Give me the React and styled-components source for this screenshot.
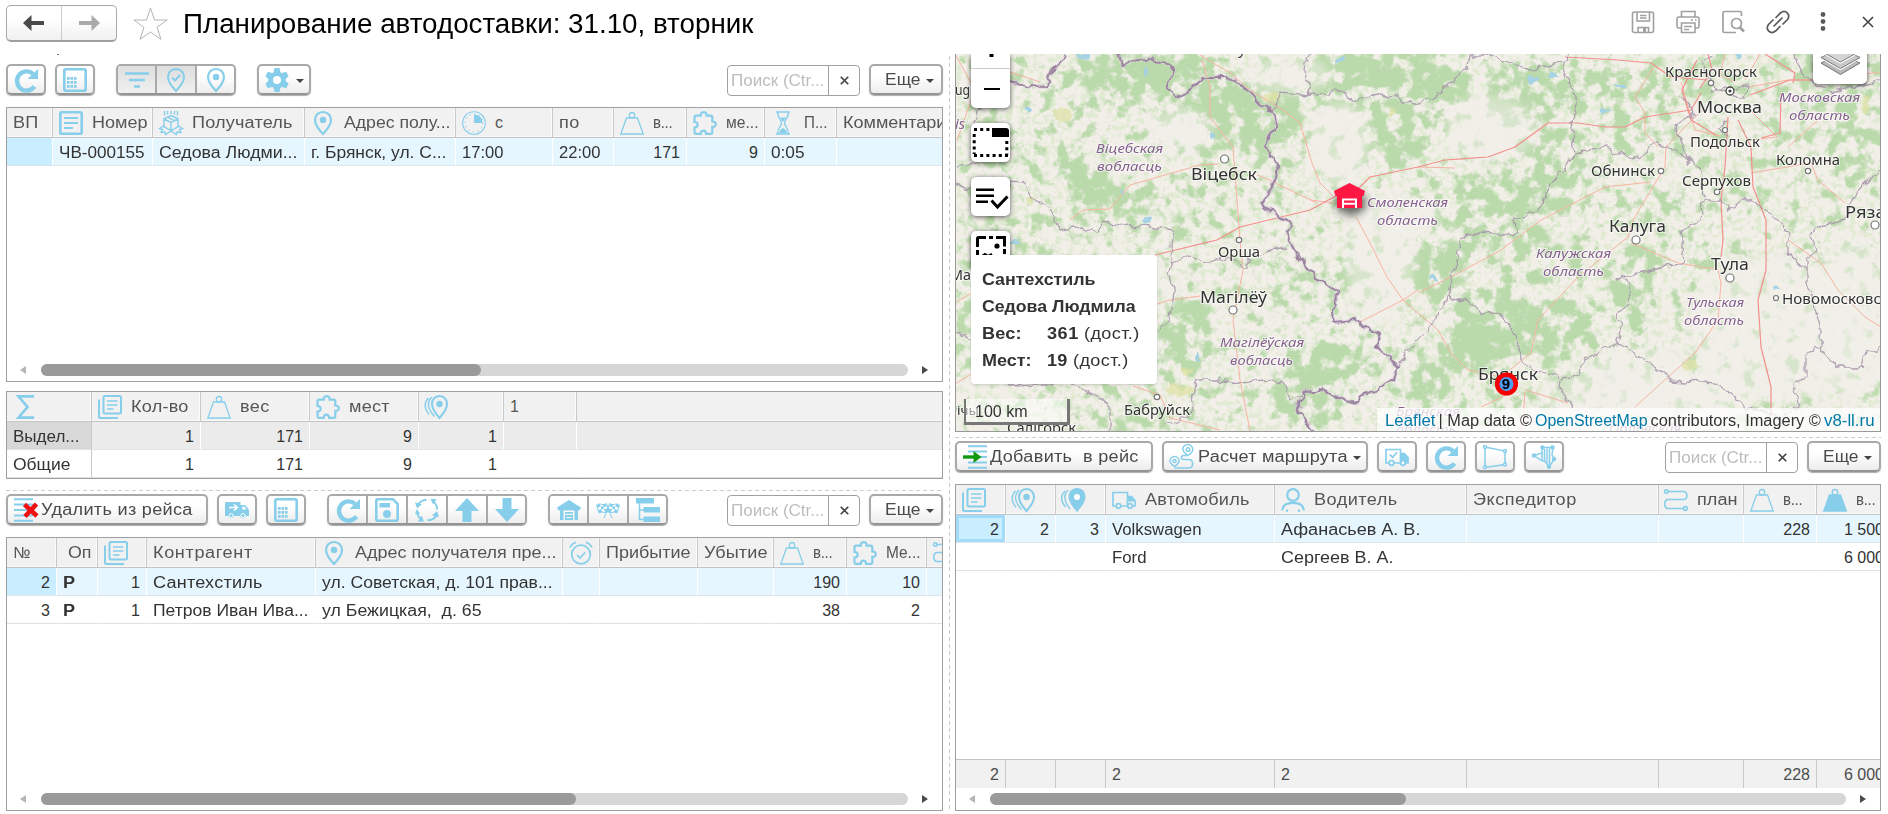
import React from "react";
import styled, { createGlobalStyle, css } from "styled-components";

const SKY = "#87ceeb";
const SANS = '"Liberation Sans", Arial, sans-serif';

const Global = createGlobalStyle`
  * { box-sizing: border-box; }
  body { margin: 0; background: #fff; font-family: ${SANS}; font-size: 16px; color: #333; overflow: hidden; }
`;

/* ---------- text widened to a given width ---------- */
const ruler = document.createElement("canvas").getContext("2d");
const widen = (text, width, size, weight) => {
  ruler.font = `${weight} ${size}px "Liberation Sans"`;
  const natural = ruler.measureText(text).width;
  const scale = Math.min(1.13, Math.max(0.94, (width + 1.5) / natural));
  const spacing = ((width + 1.5) / scale - natural) / Math.max(1, text.length - 0.5);
  return { width, letterSpacing: `${spacing.toFixed(2)}px`, transform: `scaleX(${scale.toFixed(3)})` };
};
const Tracked = styled.span`
  display: inline-block;
  white-space: pre;
  text-align: left;
  flex: none;
  transform-origin: 0 50%;
  font-size: ${(p) => p.$size}px;
  font-weight: ${(p) => p.$weight};
`;
function Txt({ w, size = 16, weight = 400, children }) {
  return <Tracked $size={size} $weight={weight} style={w ? widen(children, w, size, weight) : undefined}>{children}</Tracked>;
}

/* ---------- icons ---------- */
const IconSvg = styled.svg`
  display: block;
  flex: none;
  overflow: visible;
`;
const Svg = ({ size = 24, color = SKY, sw = 2, children }) => (
  <IconSvg width={size} height={size} viewBox="0 0 24 24" fill="none" stroke={color} strokeWidth={sw} color={color}>
    {children}
  </IconSvg>
);
const solid = { fill: "currentColor", stroke: "none" };
const PIN = "M12 1C7.3 1 4 4.600 4 9c0 5.500 8 14 8 14s8-8.500 8-14c0-4.400-3.300-8-8-8z";

const Icon = {
  refresh: () => <Svg sw={4.4}><path d="M20.500 18.500A9.600 9.600 0 1 1 19 5.800" /><path {...solid} d="M24 1v10H13.500z" /></Svg>,
  sheet: () => (
    <Svg sw={2.6}><rect x="1.300" y="1.300" width="21.400" height="21.400" rx="1.500" />
      <g {...solid}>{[9, 13, 17].map((y) => [4, 7.5, 11].map((x) => <rect key={`${x}-${y}`} x={x} y={y} width="2.600" height="2.800" />))}</g>
    </Svg>
  ),
  filter: () => <Svg sw={2.4}><path d="M0 5.500h24M4 12h16M9 18.500h6" /></Svg>,
  pinCheck: () => <Svg sw={2.1}><path d={PIN} /><path d="M8 9.500l3 3 5.200-5.500" /></Svg>,
  pin: () => <Svg sw={2.2}><path d={PIN} /><circle {...solid} cx="12" cy="9" r="3.200" /></Svg>,
  pins: () => <Svg sw={2.1}><path d="M14.500 1C9.900 1 7 4.600 7 9c0 5.500 7.500 14 7.500 14S22 14.500 22 9c0-4.400-2.900-8-7.500-8z" /><circle {...solid} cx="14.500" cy="9" r="3.200" /><path d="M7 2C2 6.500 2 13 9.500 21.500M3.500 3C-1 7.500-1 13 4 19.500" strokeWidth="1.400" /></Svg>,
  pinsFull: () => <Svg sw={1.500}><path {...solid} d="M15 0C10 0 6.500 3.800 6.500 9c0 6 8.500 15 8.500 15s8.500-9 8.500-15c0-5.200-3.500-9-8.500-9z" /><circle cx="15" cy="9" r="3" fill="#fff" stroke="none" /><path d="M6 2C1.500 6.500 1 12 8 21M3 3C-1.500 7.500-1.500 13 3.500 19" strokeWidth="1.400" /></Svg>,
  gear: () => (
    <Svg><g {...solid}>{[0, 60, 120].map((a) => <path key={a} transform={`rotate(${a} 12 12)`} d="M9.500 0h5l1.200 5v14l-1.200 5h-5l-1.200-5V5z" />)}<circle cx="12" cy="12" r="8.600" /></g>
      <circle cx="12" cy="12" r="4" fill="#fff" stroke="none" /></Svg>
  ),
  article: () => <Svg sw={2.6}><rect x="1.300" y="1.300" width="21.400" height="21.400" rx="1.500" /><path d="M5 7h14M5 12h14M5 17h9" strokeWidth="2.200" /></Svg>,
  articles: () => <Svg sw={2}><rect x="5.500" y="1" width="17.500" height="17.500" rx="1.500" /><path d="M9 6h10.500M9 10h10.500M9 14h6.500" strokeWidth="1.700" /><path d="M1 4.500V21.500a1.500 1.500 0 0 0 1.500 1.500H20" /></Svg>,
  parcel: () => <Svg sw={1.400}><path d="M12 4.500l7 3.300v8L12 19.500 5 15.800v-8zM5 8l7 3.500L19 8M12 11.500v8M8.500 6.200l7 3.400M5.500 0v4.500M8.500 0v3.500M12 0v3M15.500 0v3.500M18.500 0v4.500" /><path d="M5 14.500l-4.500 3 3 1-1.500 3 4-.5.500 2.500 5.500-3.500 5.500 3.500.500-2.500 4 .5-1.500-3 3-1-4.500-3" /></Svg>,
  clock: () => <Svg sw={1.100}><circle cx="12" cy="12" r="11.300" /><circle cx="12" cy="12" r="8.800" strokeDasharray="1.200 3.400" /><path {...solid} d="M12 3.500V12h8.500C20.500 7 17 3.500 12 3.500z" /></Svg>,
  weight: () => <Svg sw={1.300}><path d="M6.500 7h11l5.700 16H.8z" /><circle cx="12" cy="4.200" r="2.700" /></Svg>,
  weightFull: () => <Svg sw={1.500}><path d="M6.500 7h11l5.700 16H.8z" fill="currentColor" /><circle cx="12" cy="4.200" r="2.700" /></Svg>,
  puzzle: () => <Svg sw={2.2}><path d="M1.500 6.500c0-1 .6-1.800 1.600-1.800h4.700c-.2-2 .6-3.600 2.900-3.600s3.100 1.600 2.900 3.600h4c1 0 1.700.8 1.700 1.800v4c2 0 3.500.8 3.500 2.700s-1.500 2.800-3.500 2.700v5.300c0 1-.7 1.600-1.700 1.600h-4.500c-.2-2-1-3.200-2.700-3.200s-2.500 1.200-2.700 3.200H3.100c-1 0-1.600-.6-1.600-1.600v-4.500c2-.2 3.200-1 3.200-2.900s-1.200-2.800-3.200-2.800z" /></Svg>,
  hourglass: () => <Svg sw={1.400}><path d="M5 1h14M5 23h14M6.500 1c0 6 4 7.500 4 11s-4 5-4 11M17.500 1c0 6-4 7.500-4 11s4 5 4 11" /><path {...solid} d="M9 6.500h6L12 11zM8 22c.5-3 2.500-4 4-5 1.500 1 3.500 2 4 5z" /></Svg>,
  sigma: () => <Svg sw={2.7}><path d="M21 1.400H5.500L14.500 12l-9 10.600H21" /></Svg>,
  truckFull: () => (
    <Svg><path {...solid} d="M1 4h14.500v3H20l4 5v6h-3.200a3 3 0 0 1-5.800 0H9a3 3 0 0 1-5.800 0H0V5a1 1 0 0 1 1-1z" /><path d="M4 9.500h8M9 6.500l3.500 3L9 12.500" stroke="#fff" strokeWidth="1.600" /><path d="M17.300 8.800h2.200l1.800 2.700h-4z" fill="#fff" stroke="none" /><circle cx="6.100" cy="17.500" r="2" fill={SKY} stroke="#fff" strokeWidth="1" /><circle cx="17.900" cy="17.500" r="2" fill={SKY} stroke="#fff" strokeWidth="1" /></Svg>
  ),
  truck: () => <Svg sw={1.700}><path d="M4 18H1V4.500h14.500V18H9M15.500 18v-9.500h4l3.500 4V18h-2.500" /><path {...solid} d="M16 9h3.500l3.500 4.500h-7z" /><circle cx="6.500" cy="18" r="2.300" /><circle cx="18" cy="18" r="2.300" /></Svg>,
  truckCheck: () => <Svg sw={1.700}><path d="M4 18H1V4.500h14.500V18H9M15.500 18v-9.500h4l3.500 4V18h-2.500M4.800 9.500l2.800 2.700 4.500-5" /><path {...solid} d="M16 9h3.500l3.500 4.500V17h-7z" /><circle cx="6.500" cy="18" r="2.300" fill="#fff" /><circle cx="18" cy="18" r="2.300" fill="#fff" /></Svg>,
  disk: () => <Svg sw={2.600}><path d="M2.500 1.300H18l4.700 4.700v15.200a1.500 1.500 0 0 1-1.500 1.500H2.800a1.500 1.500 0 0 1-1.500-1.500V2.500a1.200 1.200 0 0 1 1.200-1.200z" /><path {...solid} d="M4.500 5H15v4.500H4.500z" /><circle {...solid} cx="12" cy="16" r="4" /></Svg>,
  cycle: () => <Svg sw={2}><path d="M11.500 2C7.500 1.500 3.500 4.500 2.500 8M22 11.500c0-4-2-7-4.500-8.500M12.500 22c4 .5 7.500-1.500 9.500-5.500M2 12.500c0 4 2 7.500 5.500 9" /><path {...solid} d="M0 4.500l7 1.800-5 4.200zM15.500 1h6l-3.500 5.500zM24 19l-7-1.500 5-4.500zM9 23.500H3l3.500-6zM2 11l3 5H0z" /></Svg>,
  up: () => <Svg><path {...solid} d="M12 0l12 13h-7.500v11h-9V13H0z" /></Svg>,
  down: () => <Svg><path {...solid} d="M7.500 0h9v11H24L12 24 0 11h7.500z" /></Svg>,
  garage: () => <Svg><path {...solid} d="M12 2l12 7.500-1.500 3H21V22h-3.500v-9.500h-11V22H3v-9.500H1.500L0 9.500zM8 14h8v1.800H8zM8 17h8v5H8z" /><path d="M9.500 19.500h5" stroke="#fff" strokeWidth="1" /></Svg>,
  flags: () => (
    <Svg sw={1}><path d="M.5 7c3.500-2.500 6 1 10-1l2 7.500c-3.500 2.500-6-.5-9.500 1.500zM23.500 7c-3.500-2.500-6 1-10-1l-2 7.500c3.500 2.500 6-.5 9.500 1.500zM10 5l6 15M14 5L8 20" />
      <path {...solid} d="M1 7l2.800-1 .8 2.600-2.800 1zM6.500 6l3 .5.600 2.600-3-.5zM4.600 8.600l2.600-.2.800 2.700-2.700.2zM2.500 12l2.800-.7.800 2.600-2.800 1zM8 11l3-.2.800 2.900-2.800.3zM23 7l-2.800-1-.8 2.600 2.800 1zM17.500 6l-3 .5-.6 2.600 3-.5zM19.400 8.600l-2.600-.2-.8 2.700 2.700.2zM21.500 12l-2.800-.7-.8 2.600 2.800 1zM16 11l-3-.2-.8 2.900 2.800.3z" /></Svg>
  ),
  tree: () => <Svg sw={1.500}><path {...solid} d="M0 0h18v5.500H0zM7.500 9H24v5.500H7.500zM7.500 18.500H24V24H7.500z" /><path d="M3.500 5v16.500H8M3.500 12H8" /></Svg>,
  alarm: () => <Svg sw={1.700}><circle cx="12" cy="13.500" r="9.300" /><path d="M8 14l3 3 5.200-5.500M1 6.500C2.200 4 4 2.200 7 1.200M23 6.500C21.800 4 20 2.200 17 1.200" /></Svg>,
  route: () => <Svg sw={1.600}><path d="M4 3.500h15.500c4.500 0 4.500 8 0 8h-15c-5 0-5 9 0 9H19" /><circle cx="2.300" cy="3.500" r="1.700" /><circle cx="21.300" cy="20.500" r="1.900" /></Svg>,
  person: () => <Svg sw={2.200}><circle cx="12" cy="7" r="5.800" /><path d="M1.300 22.500C1.300 17 6 14.800 12 14.800S22.700 17 22.700 22.500M6 23.800v-2.300M18 23.800v-2.300" /></Svg>,
  journey: () => <Svg sw={1.500}><path d="M18 10.500c-3.500-2.500-5.200-4.200-5.200-6.200A5 5 0 0 1 22.800 4.500c0 2-1.700 3.800-4.800 6zM4.500 21.500C1.700 19.500 0 18 0 16a4.500 4.500 0 0 1 9 0c0 2-1.500 3.500-4.500 5.500zM18 10.500h-4c-3.500 0-3.500 4 0 4h4.500c5.500 0 5.500 8.500 0 8.500H4.500" /><circle cx="18" cy="4.500" r="1.800" /><circle cx="4.500" cy="16" r="1.600" /></Svg>,
  polygon: () => <Svg sw={1.500}><path d="M2 2l20 4v13.500L2 22.500z" /><g fill="#fff"><circle cx="2" cy="2" r="1.500" /><circle cx="22" cy="6" r="1.500" /><circle cx="22" cy="19.500" r="1.500" /><circle cx="2" cy="22" r="1.500" /></g></Svg>,
  area: () => <Svg sw={1.400}><path d="M2 10.500L10 8V2.500h11l-1 7.500 2.500 4-5.500 8-4-5.500-3.500-1z" /><path d="M10 7v8M12.500 4v12M15 3.500v15M17.500 3.500V20" strokeWidth="1.500" /><g {...solid}><circle cx="2" cy="10.500" r="2.200" /><circle cx="10.500" cy="2.500" r="2.200" /><circle cx="20.500" cy="2.500" r="2.200" /><circle cx="22" cy="14" r="2.200" /><circle cx="17" cy="21.800" r="2.200" /></g></Svg>,
  removeRow: () => <Svg><path d="M0 1.200h19M0 6.500h19M0 12h19M0 17.500h19M0 22.800h19" strokeWidth="2.100" /><path d="M10.500 6.500l12.500 11.500M22.500 6L11 18.500" stroke="#ee1111" strokeWidth="4.600" /></Svg>,
  addRow: () => <Svg><path d="M5 1.200h19M5 6.500h19M5 12h19M5 17.500h19M5 22.800h19" strokeWidth="2.100" /><path d="M0 12h12" stroke="#119911" strokeWidth="3.400" /><path d="M10.500 6l8 6-8 6z" fill="#119911" stroke="none" /></Svg>,
};

/* ---------- buttons ---------- */
const face = css`
  background: ${(p) => (p.$on ? "linear-gradient(#dedede, #f0f0f0)" : "linear-gradient(#fff 35%, #ededed)")};
`;
const Button = styled.button`
  display: flex;
  align-items: center;
  justify-content: ${(p) => (p.$start ? "flex-start" : "center")};
  width: ${(p) => p.$w || 40}px;
  height: 31px;
  padding: ${(p) => (p.$start ? "0 0 0 6px" : "0")};
  border: 2px solid #a9a9a9;
  border-bottom-color: #949494;
  border-radius: 5px;
  box-shadow: 0 1px 1px #aaa;
  font-family: inherit;
  color: #4a4a4a;
  ${face}
`;
const Group = styled.div`
  display: flex;
  height: 31px;
  border: 2px solid #a9a9a9;
  border-bottom-color: #949494;
  border-radius: 5px;
  box-shadow: 0 1px 1px #aaa;
  overflow: hidden;
`;
const Segment = styled.button`
  display: flex;
  align-items: center;
  justify-content: center;
  width: 40px;
  padding: 0;
  border: 0;
  border-right: 2px solid #a9a9a9;
  ${face}
  &:first-child { width: 39px; }
  &:last-child { width: 37px; border-right: 0; }
`;
const Caret = styled.i`
  width: 0;
  height: 0;
  margin: ${(p) => p.$m || "2px 0 0 7px"};
  border: 4px solid transparent;
  border-top-color: #444;
  border-bottom: 0;
`;
const Toolbar = styled.div`
  display: flex;
  align-items: flex-start;
  gap: 9px;
  height: 32px;
`;
const Gap = styled.span`
  flex: ${(p) => (p.$w ? `0 0 ${p.$w - 9}px` : "1")};
  margin-left: ${(p) => (p.$w ? "0" : "-9px")};
`;
const SearchBox = styled.div`
  display: flex;
  width: 133px;
  height: 31px;
  margin-top: 1px;
  border: 1px solid #a0a0a0;
  border-radius: 4px;
  line-height: 29px;
`;
const Hint = styled.span`
  width: 101px;
  padding-left: 3px;
  color: #bdbdbd;
  border-right: 1px solid #a0a0a0;
`;
const Clear = styled.span`
  flex: 1;
  display: flex;
  align-items: center;
  justify-content: center;
`;
const Cross = ({ size, sw }) => <Svg size={size} color="#444" sw={sw}><path d="M2 2l20 20M22 2L2 22" /></Svg>;

const SearchTools = () => (
  <>
    <SearchBox><Hint><Txt w={92}>Поиск (Ctr...</Txt></Hint><Clear><Cross size={9} sw={4.5} /></Clear></SearchBox>
    <Button $w={74}><Gap $w={15} /><Txt w={34}>Еще</Txt><Caret /></Button>
  </>
);

/* ---------- tables ---------- */
const TableBox = styled.div`
  display: flex;
  flex-direction: column;
  height: ${(p) => p.$h}px;
  border: 1px solid #9f9f9f;
  overflow: hidden;
`;
const Line = styled.div`
  display: grid;
  flex: none;
  grid-template-columns: ${(p) => p.$cols.map((c) => `${c}px`).join(" ")};
`;
const HeadCell = styled.div`
  display: flex;
  align-items: center;
  gap: 9px;
  height: 30px;
  padding: 1px 0 0 ${(p) => p.$pad ?? 6}px;
  overflow: hidden;
  background: #f1f1f1;
  color: #555;
  border-right: 1px solid #c9c9c9;
  border-bottom: 1px solid #c3c3c3;
  box-shadow: inset -1px -1px #fafafa;
`;
const tones = {
  blue: ["#e5f6ff", "#c9eeff", "#fff", "#dde5ea"],
  grey: ["#ebebeb", "#d8d8d8", "#fff", "#e4e4e4"],
  plain: ["#fff", "#fff", "transparent", "#e1e1e1"],
};
const Cell = styled.div`
  display: flex;
  align-items: center;
  justify-content: ${(p) => (p.$right ? "flex-end" : "flex-start")};
  height: 28px;
  padding: 2px 6px 0 6px;
  overflow: hidden;
  color: #333;
  background: ${(p) => tones[p.$tone][p.$first ? 1 : 0]};
  border-right: 1px solid ${(p) => (p.$first && p.$fixed ? "#c9c9c9" : tones[p.$tone][2])};
  border-bottom: 1px solid ${(p) => tones[p.$tone][3]};
  ${(p) => p.$focus && "box-shadow: inset 0 0 0 3px #a3dcf8;"}
`;
const FootCell = styled.div`
  display: flex;
  align-items: center;
  justify-content: ${(p) => (p.$right ? "flex-end" : "flex-start")};
  height: 29px;
  padding: 2px 6px 0 6px;
  background: #f1f1f1;
  color: #4c4c4c;
  border-top: 1px solid #c3c3c3;
  border-right: 1px solid #c9c9c9;
`;
const Blank = styled.div`
  flex: 1;
`;
const ScrollRow = styled.div`
  display: flex;
  align-items: center;
  flex: none;
  height: 22px;
  padding: 0 14px 0 13px;
`;
const Arrow = styled.i`
  width: 0;
  height: 0;
  border: 4px solid transparent;
  ${(p) => (p.$left ? "border-right: 6px solid #b5b5b5; border-left: 0; margin-right: 15px;" : "border-left: 6px solid #4a4a4a; border-right: 0; margin-left: 14px;")}
`;
const Track = styled.div`
  flex: 1;
  height: 12px;
  border-radius: 6px;
  background: #d6d6d6;
`;
const Thumb = styled.div`
  width: ${(p) => p.$w}px;
  height: 12px;
  border-radius: 6px;
  background: #9a9a9a;
`;
const Scroll = ({ w }) => <ScrollRow><Arrow $left /><Track><Thumb $w={w} /></Track><Arrow /></ScrollRow>;

function Table({ height, cols, head, rows, foot, scroll, fixed }) {
  return (
    <TableBox $h={height}>
      <Line $cols={cols}>
        {head.map(([icon, text, w, pad], i) => {
          const Glyph = icon && Icon[icon];
          return <HeadCell key={i} $pad={pad}>{Glyph && <Glyph />}{text && <Txt w={w}>{text}</Txt>}</HeadCell>;
        })}
      </Line>
      {rows.map((row, r) => (
        <Line key={r} $cols={cols}>
          {cols.map((_, i) => {
            const [text, w, right, weight] = row.cells[i] || [];
            return (
              <Cell key={i} $first={i === 0} $fixed={fixed} $tone={row.tone} $right={right} $focus={row.focus && i === 0}>
                {text && <Txt w={w} weight={weight}>{text}</Txt>}
              </Cell>
            );
          })}
        </Line>
      ))}
      {scroll && <Blank />}
      {foot && <Line $cols={cols}>{foot.map(([text, right], i) => <FootCell key={i} $right={right}>{text}</FootCell>)}</Line>}
      {scroll && <Scroll w={scroll} />}
    </TableBox>
  );
}

const num = (t) => [t, undefined, true];

const orders = {
  cols: [46, 100, 152, 151, 97, 61, 73, 78, 72, 200],
  head: [[null, "ВП", 24], ["article", "Номер", 54], ["parcel", "Получатель", 99], ["pin", "Адрес полу...", 105, 6], ["clock", "с"], [null, "по", 19], ["weight", "в...", 18], ["puzzle", "ме...", 31], ["hourglass", "П...", 22], [null, "Комментарий", 112]],
  rows: [{ tone: "blue", cells: [[], ["ЧВ-000155", 84], ["Седова Людми...", 137], ["г. Брянск, ул. С...", 134], ["17:00", 40], ["22:00", 40], num("171"), num("9"), ["0:05", 32], []] }],
};
const totals = {
  cols: [85, 109, 109, 109, 85, 73, 400],
  head: [["sigma"], ["articles", "Кол-во", 56], ["weight", "вес", 28], ["puzzle", "мест", 39], ["pins"], [null, "1"], []],
  rows: [
    { tone: "grey", cells: [["Выдел...", 65], num("1"), num("171"), num("9"), num("1")] },
    { tone: "plain", cells: [["Общие", 56], num("1"), num("171"), num("9"), num("1")] },
  ],
};
const stops = {
  cols: [50, 41, 49, 169, 247, 37, 98, 76, 73, 80, 80],
  head: [[null, "№", 16], [null, "Оп", 22, 11], ["articles"], [null, "Контрагент", 98], ["pin", "Адрес получателя пре...", 200], ["alarm"], [null, "Прибытие", 83], [null, "Убытие", 62], ["weight", "в...", 18], ["puzzle", "Ме...", 33], ["route"]],
  rows: [
    { tone: "blue", cells: [num("2"), ["Р", 11, false, 700], num("1"), ["Сантехстиль", 108], ["ул. Советская, д. 101 прав...", 229], [], [], [], num("190"), num("10")] },
    { tone: "plain", cells: [num("3"), ["Р", 11, false, 700], num("1"), ["Петров Иван Ива...", 154], ["ул Бежицкая,  д. 65", 158], [], [], [], num("38"), num("2")] },
  ],
};
const trips = {
  cols: [50, 50, 50, 169, 192, 192, 85, 73, 74],
  head: [["articles"], ["pins"], ["pinsFull"], ["truck", "Автомобиль", 103], ["person", "Водитель", 82], [null, "Экспедитор", 102], ["route", "план", 39, 5], ["weight", "в...", 18], ["weightFull", "в...", 18]],
  rows: [
    { tone: "blue", focus: true, cells: [num("2"), num("2"), num("3"), ["Volkswagen", 88], ["Афанасьев А. В.", 138], [], [], num("228"), num("1 500")] },
    { tone: "plain", cells: [[], [], [], ["Ford", 33], ["Сергеев В. А.", 111], [], [], [], num("6 000")] },
  ],
  foot: [["2", true], [""], [""], ["2"], ["2"], [""], [""], ["228", true], ["6 000", true]],
};

/* ---------- map ---------- */
const MapFrame = styled.div`
  position: relative;
  height: 378px;
  border: 1px solid #9a9a9a;
  border-top: 0;
  overflow: hidden;
`;
const MapSvg = styled.svg`
  display: block;
`;
/* density of the woods: x, y, rx, ry, strength */
const woods = [
  [1115, 75, 55, 24, 0.9], [1190, 85, 55, 35, 0.65], [1255, 115, 50, 34, 0.95], [1165, 68, 30, 18, 0.6], [1350, 75, 50, 25, 1], [1410, 72, 45, 28, 0.9], [1400, 135, 34, 34, 0.8], [1445, 92, 22, 32, 0.7],
  [1090, 183, 26, 24, 1], [1115, 205, 35, 20, 0.7], [1250, 160, 60, 30, 0.3], [1030, 130, 60, 60, 0.2], [1180, 210, 50, 30, 0.3],
  [1540, 80, 50, 20, 0.7], [1525, 105, 40, 16, 0.7], [1555, 190, 38, 24, 0.8], [1620, 110, 55, 50, 0.45], [1480, 195, 50, 22, 0.6], [1540, 150, 24, 30, 0.7], [1500, 228, 55, 22, 0.7], [1440, 265, 32, 26, 0.9], [1435, 290, 18, 14, 0.7],
  [1490, 325, 42, 32, 1], [1470, 355, 36, 24, 0.9], [1560, 330, 38, 32, 0.8], [1620, 292, 14, 18, 1], [1540, 262, 60, 28, 0.35], [1640, 260, 28, 14, 0.7], [1640, 312, 12, 26, 0.7], [1570, 390, 26, 18, 0.7], [1430, 385, 24, 22, 0.9], [1505, 400, 20, 12, 0.8],
  [1185, 322, 30, 24, 0.9], [1180, 362, 24, 22, 0.7], [1330, 362, 46, 18, 1], [1300, 388, 24, 16, 0.8], [1310, 405, 44, 14, 0.7], [1300, 285, 50, 24, 0.3], [1350, 270, 20, 12, 0.7], [1100, 400, 60, 30, 0.3], [1150, 430, 60, 18, 0.4], [965, 320, 16, 60, 0.6],
  [1700, 75, 60, 30, 0.35], [1820, 70, 60, 30, 0.5], [1860, 140, 30, 50, 0.55], [1790, 130, 40, 24, 0.3], [1660, 215, 40, 24, 0.35], [1730, 175, 40, 30, 0.25], [1820, 210, 40, 20, 0.2], [1030, 230, 70, 40, 0.25],
];
const bare = [
  [1490, 130, 45, 34], [1340, 145, 30, 44], [1290, 75, 40, 20], [1380, 260, 34, 60], [1780, 330, 90, 70], [1850, 320, 40, 80], [1600, 400, 60, 30], [1180, 130, 30, 20], [1120, 290, 60, 30], [1640, 370, 50, 24], [1400, 215, 40, 18], [1690, 400, 60, 30],
];
const country = [
  "1010,82 1027,86 1047,87 1050,72 1063,60 1067,54",
  "1118,54 1123,65 1147,58 1173,68 1167,88 1177,97 1198,85 1203,78 1227,78 1245,88 1253,97 1263,108 1273,110 1275,125 1265,147 1278,167 1275,182 1262,203 1278,218 1292,222 1287,237 1300,260 1317,280 1338,290 1332,322 1355,320 1380,335 1377,347 1398,365 1393,380 1353,403 1320,390 1303,392 1297,410 1313,432",
];
const regions = [
  "1273,110 1280,92 1310,95 1330,97 1335,90 1347,92 1350,100 1380,95 1420,103 1433,97 1468,68 1470,55 1488,55 1528,70 1561,63 1570,80 1576,107 1571,123 1575,153 1545,193 1543,207 1513,220 1518,235 1481,232 1461,237 1456,263 1448,297 1431,327 1418,337 1398,365",
  "1310,54 1305,70 1310,95", "1570,54 1561,63",
  "1448,297 1470,302 1481,313 1498,312 1515,333 1523,363 1541,372 1558,377 1561,393 1573,407",
  "1558,383 1578,373 1585,360 1618,342 1621,330 1616,317 1630,297 1631,283 1618,278 1651,270 1685,263 1681,233 1701,220 1703,200 1701,167 1681,153 1658,143 1645,150 1638,160 1605,147 1575,153",
  "1618,342 1645,360 1671,380 1715,383 1728,392 1745,407 1781,417 1798,407 1795,383 1806,377 1806,353 1820,348 1836,367 1861,367 1865,353 1881,348",
  "1820,348 1820,327 1813,300 1806,283 1806,260 1818,253 1811,237 1818,225 1845,220 1855,193 1881,170",
  "1806,270 1788,253 1788,233 1771,213 1751,200 1741,200 1728,210 1721,200 1704,200",
  "1691,163 1675,127 1695,113 1680,95", "1796,54 1803,75 1830,92 1881,80",
  "1010,182 1022,183 1030,197 1050,207 1060,230 1083,227 1097,233 1103,222 1130,227 1143,225 1173,230 1171,247 1173,260 1168,273 1173,290 1170,320 1157,333",
  "1173,262 1190,257 1210,263 1227,257 1247,267 1250,257 1270,250 1287,247",
  "1073,383 1093,393 1110,407 1110,432", "1163,425 1190,417 1197,380 1217,380 1240,383 1263,380 1283,383 1290,400 1303,392",
  "980,107 973,123 983,157 957,167", "955,185 980,190 1000,215 1010,182", "955,330 985,350 1010,385 1073,383",
  "1712,54 1702,62 1716,90 1745,98 1748,85 1710,92", "1728,120 1718,128 1728,135",
];
const roads = [
  "1200,55 1230,73 1250,90 1283,110 1300,123 1312,163 1320,183 1334,197", "1202,60 1210,87 1210,117 1233,147 1240,240 1243,270 1233,320 1240,380 1250,431", "1273,182 1317,203",
  "1455,168 1418,167", "1356,217 1370,243 1387,277 1403,300 1418,313 1438,330 1451,353 1468,370 1501,377 1531,353 1538,320 1578,277 1628,237 1633,220 1651,190 1665,167 1666,147 1685,127 1705,107",
  "1418,293 1451,277 1501,250 1541,220 1605,187 1651,182", "1334,203 1310,200", "1653,68 1635,97 1645,113 1645,133 1658,147",
  "1510,393 1481,407", "1525,390 1568,403", "1525,392 1522,431", "1631,243 1678,263 1718,270 1721,283 1718,320 1695,353 1668,377 1635,407",
  "1751,173 1811,163 1818,180 1845,203", "1788,240 1821,263 1838,290 1865,317 1881,327", "1748,87 1788,80 1815,80 1881,72", "1788,147 1818,120",
  "1681,82 1695,130 1720,136", "1010,72 1040,82", "955,54 975,90 957,140", "1070,220 1083,210 1110,209 1130,185 1200,165 1218,164", "1257,175 1275,182", "955,303 1010,270", "955,384 1010,350 1170,300 1200,296", "1133,386 1160,395 1170,418 1220,430", "1360,322 1403,300 1418,290", "1750,110 1777,137 1751,140", "1725,54 1720,75 1735,82", "1760,54 1745,80",
];
const mainRoads = [
  "1155,255 1217,240 1240,227 1277,218 1310,210 1334,197 1360,187 1370,177 1418,167 1445,160 1488,157 1515,147 1548,123 1578,123 1605,127 1625,127 1645,117 1691,110 1701,93",
  "1565,57 1618,60 1651,63 1671,77 1708,80", "1765,54 1795,73 1793,83", "1781,93 1780,133 1761,138", "1728,117 1725,167 1721,200 1723,240 1721,257", "1738,120 1751,147 1753,187 1766,220 1766,270 1758,300 1761,347 1771,387 1771,417",
  "1697,60 1682,90 1691,120 1716,135", "1708,54 1712,70 1700,88", "1750,95 1790,80 1830,80",
];
const waters = [[1083, 56, 6, 3], [1146, 70, 2, 6], [1028, 110, 4, 3], [1533, 79, 6, 3], [1553, 75, 6, 2], [1212, 136, 3, 3], [1148, 220, 3, 4], [1122, 192, 2, 4], [1433, 278, 4, 2], [1340, 60, 5, 2], [1620, 85, 7, 2], [1738, 57, 4, 2], [1015, 242, 4, 2], [1197, 358, 2, 5], [1776, 287, 4, 1.500], [1605, 110, 5, 3]];
const sands = [[1062, 115, 10, 7], [1272, 97, 8, 6], [1030, 200, 4, 4], [1865, 105, 5, 8], [1690, 365, 6, 5], [1186, 372, 5, 4], [1180, 390, 14, 7], [1393, 112, 3, 6]];
/* text, left, baseline, width, font size */
const cities = [
  ["ug", 955, 95, 15, 15], ["Віцебск", 1191, 180, 66, 16], ["Орша", 1218, 257, 42, 14], ["Магілёў", 1200, 303, 67, 16], ["Бабруйск", 1124, 415, 66, 14], ["Салігорск", 1007, 433, 69, 14], ["Красногорск", 1665, 77, 92, 14], ["Москва", 1697, 113, 65, 17], ["Подольск", 1690, 147, 70, 14], ["Коломна", 1776, 165, 64, 14], ["Обнинск", 1591, 176, 64, 14], ["Серпухов", 1682, 186, 69, 14], ["Калуга", 1609, 232, 57, 16], ["Рязань", 1845, 218, 62, 16], ["Тула", 1711, 270, 38, 16], ["Новомосковск", 1782, 304, 107, 14], ["Брянск", 1478, 380, 60, 16], ["Ма", 950, 280, 21, 14], ["ічы", 957, 415, 22, 13], ["у", 1238, 54, 8, 14],
];
const provinces = [
  ["is", 955, 129, 10], ["Віцебская", 1096, 153, 67], ["вобласць", 1097, 171, 65], ["Смоленская", 1367, 207, 81], ["область", 1377, 225, 61], ["Московская", 1779, 102, 81], ["область", 1789, 120, 61], ["Калужская", 1536, 258, 75], ["область", 1543, 276, 61], ["Тульская", 1686, 307, 58], ["область", 1684, 325, 60], ["Магілёўская", 1220, 347, 84], ["вобласць", 1230, 365, 63], ["Брянская", 1396, 416, 64], ["область", 1396, 434, 60], ["Орловская", 1609, 433, 72],
];
const dots = [[1224.500, 159, 4], [1239, 240, 2.700], [1233, 310, 4], [1157, 397, 2.700], [1711, 83, 2.700], [1725, 130, 2.500], [1808, 171, 2.700], [1661, 171, 2.700], [1717, 192, 2.700], [1636, 240, 4], [1875, 225, 4], [1730, 278, 4], [1776, 298, 2.500]];
const MapText = styled.text`
  font-family: "Noto Sans", "Open Sans", sans-serif;
  font-style: ${(p) => (p.$region ? "italic" : "normal")};
  fill: ${(p) => (p.$region ? "#86608f" : "#333")};
  stroke: rgba(255, 255, 255, 0.6);
  stroke-width: 2px;
  paint-order: stroke;
`;
const Lines = ({ list, ...rest }) => <g fill="none" strokeLinejoin="round" {...rest}>{list.map((p, i) => <polyline key={i} points={p} />)}</g>;

function MapCanvas() {
  return (
    <MapSvg width="924" height="377" viewBox="956 54 924 377">
      <defs>
        <filter id="woods" filterUnits="userSpaceOnUse" x="956" y="54" width="924" height="377">
          <feGaussianBlur in="SourceGraphic" stdDeviation="6" result="density" />
          <feTurbulence type="fractalNoise" baseFrequency="0.07" numOctaves="5" seed="8" result="noise" />
          <feComposite in="noise" in2="density" operator="arithmetic" k2="0.75" k3="0.42" k4="0" />
          <feComponentTransfer result="cut"><feFuncA type="linear" slope="8" intercept="-4.050" /></feComponentTransfer>
          <feFlood floodColor="#bbdaac" />
          <feComposite operator="in" in2="cut" />
        </filter>
        <filter id="fields" filterUnits="userSpaceOnUse" x="956" y="54" width="924" height="377">
          <feTurbulence type="fractalNoise" baseFrequency="0.16" numOctaves="3" seed="21" />
          <feComponentTransfer result="cut"><feFuncA type="linear" slope="7" intercept="-3.500" /></feComponentTransfer>
          <feFlood floodColor="#d6e7c6" />
          <feComposite operator="in" in2="cut" />
        </filter>
        <filter id="ragged" filterUnits="userSpaceOnUse" x="950" y="48" width="940" height="390">
          <feTurbulence type="fractalNoise" baseFrequency="0.1" numOctaves="2" seed="4" result="n" />
          <feDisplacementMap in="SourceGraphic" in2="n" scale="10" xChannelSelector="R" yChannelSelector="G" />
        </filter>
        <filter id="soft" x="-50%" y="-50%" width="200%" height="200%"><feGaussianBlur stdDeviation="4" /></filter>
        <mask id="fieldMask"><rect x="956" y="54" width="924" height="377" fill="#999" /><g filter="url(#soft)">{bare.map(([x, y, a, b], i) => <ellipse key={i} cx={x} cy={y} rx={a} ry={b} fill="#222" />)}</g></mask>
      </defs>
      <rect x="956" y="54" width="924" height="377" fill="#f2efe9" />
      <g mask="url(#fieldMask)"><rect x="956" y="54" width="924" height="377" filter="url(#fields)" /></g>
      <g filter="url(#woods)">
        <rect x="956" y="54" width="924" height="377" fillOpacity="0.18" />
        {woods.map(([x, y, a, b, s], i) => <ellipse key={i} cx={x} cy={y} rx={a} ry={b} fillOpacity={s * 0.6} />)}
      </g>
      <g filter="url(#soft)">
        {bare.map(([x, y, a, b], i) => <ellipse key={i} cx={x} cy={y} rx={a} ry={b} fill="#f2efe9" opacity="0.5" />)}
      </g>
      <g filter="url(#ragged)">
        {sands.map(([x, y, a, b], i) => <ellipse key={i} cx={x} cy={y} rx={a} ry={b} fill="#dfe3a4" opacity="0.7" />)}
        {waters.map(([x, y, a, b], i) => <ellipse key={i} cx={x} cy={y} rx={a} ry={b} fill="#a5d2e4" />)}
      </g>
      <Lines list={roads} stroke="#f7b3a2" strokeWidth="1" />
      <Lines list={mainRoads} stroke="#f2908c" strokeWidth="1.200" />
      <g filter="url(#ragged)">
        <Lines list={regions} stroke="#a593aa" strokeWidth="1.300" opacity="0.85" />
        <Lines list={country} stroke="#d9c8db" strokeWidth="4" opacity="0.6" />
        <Lines list={country} stroke="#9c85a0" strokeWidth="2.200" />
      </g>
      {dots.map(([x, y, r], i) => <circle key={i} cx={x} cy={y} r={r} fill="#fff" stroke="#777" strokeWidth="1.200" />)}
      <circle cx="1730" cy="91" r="4" fill="#fff" stroke="#444" strokeWidth="1.300" /><circle cx="1730" cy="91" r="1.600" fill="#444" />
      {cities.map(([t, x, y, w, s]) => <MapText key={t} x={x} y={y} fontSize={s} textLength={w} lengthAdjust="spacingAndGlyphs">{t}</MapText>)}
      {provinces.map(([t, x, y, w], i) => <MapText key={i} $region x={x} y={y} fontSize="13.500" textLength={w} lengthAdjust="spacingAndGlyphs">{t}</MapText>)}
      <ellipse cx="1351" cy="203" rx="15" ry="12" fill="#222" opacity="0.65" filter="url(#soft)" />
      <path d="M1349.500 183l15.500 8-1.500 5h-1.500v12h-25v-12h-1.500l-1.500-5z" fill="#ff1744" />
      <path d="M1343 208v-8.500h13v8.500M1343 203.800h13" fill="none" stroke="#fff" strokeWidth="2" />
      <circle cx="1506.500" cy="384" r="9.300" fill="#4f9df5" stroke="#f40000" strokeWidth="4.600" />
      <text x="1506" y="389" textAnchor="middle" fontFamily="Liberation Sans" fontWeight="700" fontSize="15">9</text>
    </MapSvg>
  );
}

const MapControls = styled.div`
  position: absolute;
  top: 0;
  left: 15px;
  display: flex;
  flex-direction: column;
  gap: 15px;
`;
const MapButton = styled.div`
  display: flex;
  align-items: ${(p) => (p.$zoom ? "flex-end" : "center")};
  justify-content: center;
  width: 39px;
  height: ${(p) => (p.$zoom ? 54 : 39)}px;
  background: #fff;
  border-radius: ${(p) => (p.$zoom ? "0 0 5px 5px" : "5px")};
  box-shadow: 0 1px 5px rgba(0, 0, 0, 0.65);
`;
const LayersButton = styled(MapButton)`
  position: absolute;
  top: -24px;
  right: 13px;
  width: 54px;
  height: 54px;
`;
const Tooltip = styled.div`
  position: absolute;
  left: 15px;
  top: 201px;
  width: 186px;
  height: 129px;
  padding: 11px 0 0 11px;
  background: #fff;
  border-radius: 4px;
  line-height: 27px;
  color: #333;
  box-shadow: 0 1px 3px rgba(0, 0, 0, 0.15);
`;
const TipRow = styled.div`
  display: grid;
  grid-template-columns: ${(p) => (p.$pair ? "65px auto 1fr" : "1fr")};
`;
const TipNote = styled.span`
  padding-left: 7px;
`;
const Scale = styled.div`
  position: absolute;
  left: 8px;
  top: 345px;
  width: 106px;
  height: 26px;
  padding-left: 9px;
  border: solid #777;
  border-width: 0 3px 3px 2px;
  background: rgba(255, 255, 255, 0.5);
  line-height: 25px;
  color: #333;
`;
const Attribution = styled.div`
  position: absolute;
  right: 0;
  bottom: 0;
  height: 23px;
  padding: 0 7px 0 8px;
  background: rgba(255, 255, 255, 0.75);
  line-height: 25px;
  white-space: pre;
  color: #333;
`;
const Link = styled.span`
  color: #0078a8;
`;

const MapPanel = () => (
  <MapFrame>
    <MapCanvas />
    <MapControls>
      <MapButton $zoom>
        <IconSvg width="39" height="54" fill="none" stroke="#000">
          <path d="M20.500 0v3" strokeWidth="4" /><path d="M0 14.500h39" stroke="#ccc" /><path d="M13 35h16" strokeWidth="2" />
        </IconSvg>
      </MapButton>
      <MapButton>
        <IconSvg width="39" height="39" fill="none" stroke="#000" strokeWidth="3">
          <path d="M3 6.500h16M3 32.500h34M3.200 11v20M35.800 18v14" strokeDasharray="3 3.200" /><path d="M21 5h14a3 3 0 0 1 3 3v6H21z" fill="#000" stroke="none" />
        </IconSvg>
      </MapButton>
      <MapButton>
        <IconSvg width="39" height="39" fill="none" stroke="#000" strokeWidth="2.600">
          <path d="M5 12.700h18M5 18.700h18M5 24.700h12" /><path d="M20.500 23.500l6 6.500 10-10.500" strokeWidth="3" />
        </IconSvg>
      </MapButton>
      <MapButton>
        <IconSvg width="39" height="39" fill="none" stroke="#000" strokeWidth="3">
          <path d="M6.500 16V7.500a1 1 0 0 1 1-1H15M6.500 19v5M18 6.500h4M25 6.500h8.500v9M33.500 18v5" /><circle cx="26" cy="15" r="2.600" fill="#000" stroke="none" /><path d="M11 25l3-2 3 2 4-2" strokeWidth="2" />
        </IconSvg>
      </MapButton>
    </MapControls>
    <LayersButton>
      <IconSvg width="40" height="40" viewBox="0 0 40 40" stroke="#777" strokeWidth="1">
        <path d="M1 26l19.500-9L40 26 20.500 37.500z" fill="#b8b8b8" /><path d="M1 20.500l19.500-9L40 20.500 20.500 31.500z" fill="#c0c0c0" stroke="#fff" strokeWidth="3" /><path d="M1 20.500l19.500-9L40 20.500 20.500 31.500z" fill="#c8c8c8" /><path d="M1 14l19.500-9L40 14 20.500 25z" fill="#dcdcdc" stroke="#fff" strokeWidth="3" /><path d="M1 14l19.500-9L40 14 20.500 25z" fill="#d5d5d5" />
      </IconSvg>
    </LayersButton>
    <Tooltip>
      <TipRow><Txt w={112} weight={700}>Сантехстиль</Txt></TipRow>
      <TipRow><Txt w={152} weight={700}>Седова Людмила</Txt></TipRow>
      <TipRow $pair><Txt w={38} weight={700}>Вес:</Txt><Txt w={30} weight={700}>361</Txt><TipNote><Txt w={54}>(дост.)</Txt></TipNote></TipRow>
      <TipRow $pair><Txt w={48} weight={700}>Мест:</Txt><Txt w={19} weight={700}>19</Txt><TipNote><Txt w={54}>(дост.)</Txt></TipNote></TipRow>
    </Tooltip>
    <Scale><Txt w={51}>100 km</Txt></Scale>
    <Attribution>
      <Link><Txt w={49}>Leaflet</Txt></Link><Txt w={101}>{" | Map data © "}</Txt><Link><Txt w={111}>OpenStreetMap</Txt></Link><Txt w={178}>{" contributors, Imagery © "}</Txt><Link><Txt w={49}>v8-ll.ru</Txt></Link>
    </Attribution>
  </MapFrame>
);

/* ---------- page ---------- */
const Header = styled.header`
  display: flex;
  align-items: flex-start;
  height: 54px;
  padding: 5px 8px 0 6px;
`;
const NavButtons = styled.div`
  display: flex;
  width: 111px;
  height: 37px;
  border: 1px solid #a9a9a9;
  border-bottom: 2px solid #a0a0a0;
  border-radius: 5px;
  background: linear-gradient(#fff 40%, #f0f0f0);
`;
const NavHalf = styled.span`
  flex: 1;
  display: flex;
  align-items: center;
  justify-content: center;
  & + & { border-left: 1px solid #ccc; }
`;
const Star = styled.div`
  margin: 1px 0 0 16px;
`;
const Title = styled.h1`
  flex: 1;
  margin: 0 0 0 15px;
  line-height: 34px;
  font-weight: 400;
  color: #000;
`;
const Tools = styled.div`
  display: flex;
  gap: 21px;
  padding-top: 5px;
`;
const Main = styled.main`
  display: flex;
  height: 760px;
  padding-left: 6px;
`;
const Left = styled.section`
  width: 937px;
`;
const Right = styled.section`
  width: 926px;
`;
const Splitter = styled.div`
  width: 7px;
  margin: 2px 5px 0 0;
  height: 755px;
  background: repeating-linear-gradient(#ccc 0 4px, transparent 4px 7px) right / 1px 100% no-repeat;
`;
const Divider = styled.div`
  height: 1px;
  margin: ${(p) => p.$m};
  background: repeating-linear-gradient(90deg, #ccc 0 4px, transparent 4px 7px);
`;
const Mark = styled.div`
  width: 2px;
  height: 1px;
  margin: 0 0 9px 51px;
  background: #777;
`;
const Space = styled.div`
  height: ${(p) => p.$h}px;
`;

const NavArrow = ({ color, flip }) => (
  <IconSvg width="22" height="16" viewBox="0 0 22 16" fill={color}><path transform={flip ? "translate(22 0) scale(-1 1)" : undefined} d="M0 8l8.500-8v6H21v4H8.500v6z" /></IconSvg>
);

export default function App() {
  return (
    <>
      <Global />
      <Header>
        <NavButtons><NavHalf><NavArrow color="#4a4a4a" /></NavHalf><NavHalf><NavArrow color="#aaa" flip /></NavHalf></NavButtons>
        <Star>
          <IconSvg width="35" height="34" viewBox="0 0 35 34" fill="#fff" stroke="#b4b4b4"><path d="M17.500 2l4 12h12.700L24 21.300l4 12L17.500 26 7 33.300l4-12L.8 14h12.700z" /></IconSvg>
        </Star>
        <Title><Txt w={569} size={27}>Планирование автодоставки: 31.10, вторник</Txt></Title>
        <Tools>
          <Svg color="#a0a0a0" sw={1.600}><rect x="1.500" y="2" width="21" height="20.500" rx="2" /><path d="M6 2v9h12.500V2M9 5.500h6.500M9 8h6.500M7 22v-4.500h10.500V22" /><path {...solid} d="M12 18h3v4h-3z" /></Svg>
          <Svg color="#a0a0a0" sw={1.600}><path d="M5.500 7V1.500h13.500V7M5 18H3a2 2 0 0 1-2-2V9a2 2 0 0 1 2-2h18a2 2 0 0 1 2 2v7a2 2 0 0 1-2 2h-2M5.500 13h13.500v9.500h-13.500zM8 16.500h8M8 19.500h5M15 10h2M19 10h1.500" /></Svg>
          <Svg color="#a0a0a0" sw={1.700}><path d="M20.500 6V3a1.500 1.500 0 0 0-1.500-1.500H3.500A1.500 1.500 0 0 0 2 3v18a1.500 1.500 0 0 0 1.500 1.500H15" /><circle cx="15.500" cy="13.500" r="5" /><path d="M18.500 17l4.500 4.500" strokeWidth="2.600" /></Svg>
          <Svg color="#5a5a5a" sw={1.700}><path d="M7.500 16.500l9-9M9.500 8l5-5c5-4 10.500 1.500 7 6.500l-5 5M14.500 16l-5 5c-5 4-10.500-1.500-7-6.500l5-5" /></Svg>
          <Svg color="#5a5a5a"><g {...solid}><circle cx="12" cy="4.500" r="2.400" /><circle cx="12" cy="11.500" r="2.400" /><circle cx="12" cy="18.500" r="2.400" /></g></Svg>
          <Svg color="#444" sw={1.600}><path d="M7 7l10 10M17 7L7 17" /></Svg>
        </Tools>
      </Header>
      <Main>
        <Left>
          <Mark />
          <Toolbar>
            <Button><Icon.refresh /></Button>
            <Button><Icon.sheet /></Button>
            <Gap $w={12} />
            <Group><Segment $on><Icon.filter /></Segment><Segment $on><Icon.pinCheck /></Segment><Segment><Icon.pin /></Segment></Group>
            <Gap $w={12} />
            <Button $w={54}><Icon.gear /><Caret $m="2px 0 0 7px" /></Button>
            <Gap />
            <SearchTools />
          </Toolbar>
          <Space $h={11} />
          <Table height={275} {...orders} scroll={440} />
          <Space $h={9} />
          <Table height={88} {...totals} fixed />
          <Divider $m="11px 0 3px" />
          <Toolbar>
            <Button $w={202} $start><Icon.removeRow /><Gap $w={12} /><Txt w={150}>Удалить из рейса</Txt></Button>
            <Button><Icon.truckFull /></Button>
            <Button><Icon.sheet /></Button>
            <Gap $w={12} />
            <Group><Segment><Icon.refresh /></Segment><Segment><Icon.disk /></Segment><Segment><Icon.cycle /></Segment><Segment><Icon.up /></Segment><Segment><Icon.down /></Segment></Group>
            <Gap $w={12} />
            <Group><Segment><Icon.garage /></Segment><Segment><Icon.flags /></Segment><Segment><Icon.tree /></Segment></Group>
            <Gap />
            <SearchTools />
          </Toolbar>
          <Space $h={11} />
          <Table height={274} {...stops} scroll={535} />
        </Left>
        <Splitter />
        <Right>
          <MapPanel />
          <Divider $m="5px 0 3px" />
          <Toolbar>
            <Button $w={198} $start><Icon.addRow /><Gap $w={12} /><Txt w={147}>Добавить  в рейс</Txt></Button>
            <Button $w={206} $start><Icon.journey /><Gap $w={13} /><Txt w={148}>Расчет маршрута</Txt><Caret /></Button>
            <Button><Icon.truckCheck /></Button>
            <Button><Icon.refresh /></Button>
            <Button><Icon.polygon /></Button>
            <Button><Icon.area /></Button>
            <Gap />
            <SearchTools />
          </Toolbar>
          <Space $h={11} />
          <Table height={327} {...trips} scroll={416} />
        </Right>
      </Main>
    </>
  );
}
